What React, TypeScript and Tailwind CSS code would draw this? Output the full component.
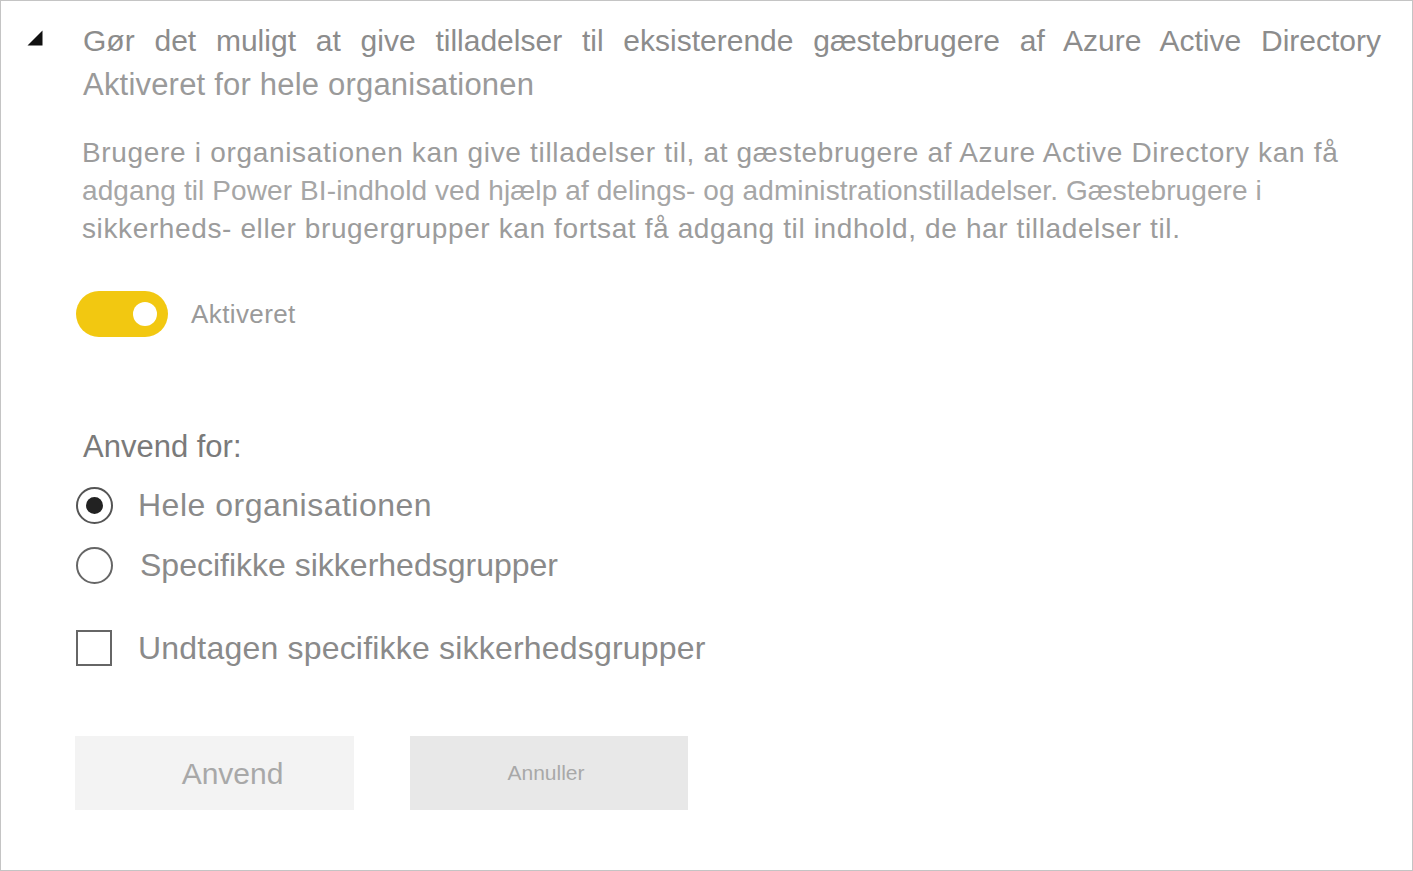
export default function App() {
  return (
    <div className="w-[1413px] h-[871px] bg-white [font-family:'Liberation_Sans',Arial,sans-serif]">
      <div className="w-full h-full border border-[#c4c4c4] flex flex-col">
        {/* Header */}
        <div className="flex items-start pt-[21px]">
          <div className="w-[82px] flex justify-start pl-[26px] pt-[8px]">
            <svg width="16" height="16" viewBox="0 0 16 16">
              <polygon points="15.5,0.5 15.5,15.5 0.5,15.5" fill="#111" />
            </svg>
          </div>
          <div className="flex-1 pr-[31px]">
            <div className="text-[30px] leading-[38px] text-[#8c8c8c] [text-align-last:justify]">
              Gør det muligt at give tilladelser til eksisterende gæstebrugere af Azure Active Directory
            </div>
            <div className="text-[31px] leading-[34px] mt-[8px] text-[#9a9a9a] tracking-[0.2px]">
              Aktiveret for hele organisationen
            </div>
          </div>
        </div>

        {/* Description */}
        <div className="pl-[81px] pr-[40px] mt-[32px] text-[28px] leading-[38px] text-[#9c9c9c] whitespace-nowrap">
          <span className="block tracking-[0.68px]">
            Brugere i organisationen kan give tilladelser til, at gæstebrugere af Azure Active Directory kan få
          </span>
          <span className="block tracking-[0.1px] text-[#a6a6a6]">
            adgang til Power BI-indhold ved hjælp af delings- og administrationstilladelser. Gæstebrugere i
          </span>
          <span className="block tracking-[0.62px]">
            sikkerheds- eller brugergrupper kan fortsat få adgang til indhold, de har tilladelser til.
          </span>
        </div>

        {/* Toggle */}
        <div className="flex items-center pl-[75px] mt-[43px]">
          <div className="w-[92px] h-[46px] rounded-full bg-[#f2c811] flex items-center justify-end pr-[11px]">
            <div className="w-[24px] h-[24px] rounded-full bg-white" />
          </div>
          <span className="ml-[23px] text-[26px] text-[#9a9a9a] tracking-[0.4px]">Aktiveret</span>
        </div>

        {/* Apply for */}
        <div className="pl-[82px] mt-[92px] text-[31px] leading-[36px] text-[#7a7a7a]">Anvend for:</div>

        <div className="flex flex-col pl-[75px] mt-[15px]">
          <label className="flex items-center h-[50px]">
            <span className="w-[37px] h-[37px] rounded-full border-[2.5px] border-[#555] flex items-center justify-center">
              <span className="w-[17px] h-[17px] rounded-full bg-[#222]" />
            </span>
            <span className="ml-[25px] text-[32px] text-[#8a8a8a] tracking-[0.5px]">Hele organisationen</span>
          </label>
          <label className="flex items-center h-[50px] mt-[10px]">
            <span className="w-[37px] h-[37px] rounded-full border-[2.5px] border-[#666]" />
            <span className="ml-[27px] text-[32px] text-[#8a8a8a]">Specifikke sikkerhedsgrupper</span>
          </label>
          <label className="flex items-center h-[50px] mt-[33px]">
            <span className="w-[36px] h-[36px] border-[2px] border-[#666]" />
            <span className="ml-[26px] text-[32px] text-[#8a8a8a] tracking-[0.2px]">Undtagen specifikke sikkerhedsgrupper</span>
          </label>
        </div>

        {/* Buttons */}
        <div className="flex pl-[74px] mt-[63px] gap-[56px]">
          <button className="w-[279px] h-[74px] bg-[#f3f3f3] text-[30px] text-[#a8a8a8] flex items-center justify-center pl-[36px]">
            Anvend
          </button>
          <button className="w-[278px] h-[74px] bg-[#e8e8e8] text-[21px] text-[#a8a8a8] flex items-center justify-center pr-[6px]">
            Annuller
          </button>
        </div>
      </div>
    </div>
  );
}
